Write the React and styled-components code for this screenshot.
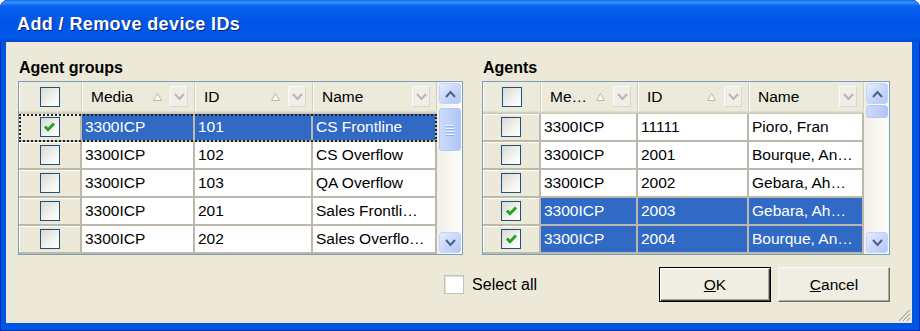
import React from 'react';
import styled, { createGlobalStyle } from 'styled-components';

const GlobalStyle = createGlobalStyle`
  html, body { margin: 0; padding: 0; background: #fff; }
  body { font-family: "Liberation Sans", Arial, sans-serif; }
  * { box-sizing: border-box; }
`;

const Window = styled.div`
  width: 920px;
  height: 331px;
  display: flex;
  flex-direction: column;
  background: #0055e5;
  border-radius: 8px 8px 0 0;
  overflow: hidden;
  box-shadow: inset 1px 0 #0030b0, inset -1px 0 #0030b0, inset 0 -1px #0030b0;
`;

const TitleBar = styled.div`
  height: 42px;
  flex: none;
  display: flex;
  align-items: center;
  padding: 7px 0 0 17px;
  background: linear-gradient(180deg, #0a6af5 0%, #3a93ff 5%, #0b62f0 14%, #0055e5 50%, #0058ec 88%, #0046cf 100%);
  color: #fff;
  font-size: 18px;
  font-weight: bold;
  letter-spacing: 0.4px;
  text-shadow: 1px 1px #0f1f6b;
`;

const Body = styled.div`
  flex: 1;
  position: relative;
  margin: 0 8px 8px 6px;
  background: #ece9d8;
  padding: 16px 22px 0 12px;
  display: flex;
  flex-direction: column;
`;

const Panels = styled.div`
  display: flex;
  gap: 19px;
`;

const Panel = styled.div`
  width: ${p => p.$width}px;
  display: flex;
  flex-direction: column;
`;

const Label = styled.div`
  font-size: 16px;
  font-weight: bold;
  line-height: 20px;
  margin-bottom: 3px;
  padding-left: 1px;
  color: #000;
`;

const ListView = styled.div`
  height: 174px;
  border: 1px solid #7f9db9;
  background: #fff;
  display: flex;
`;

const Table = styled.div`
  flex: 1;
  display: flex;
  flex-direction: column;
`;

const HeaderRow = styled.div`
  display: grid;
  grid-template-columns: ${p => p.$cols};
  height: 32px;
  padding-bottom: 3px;
  background: #ebeadb;
  box-shadow: inset 0 -1px #cbc7b8, inset 0 -2px #d6d2c2, inset 0 -3px #e2decd;
`;

const HeaderCell = styled.div`
  display: flex;
  align-items: center;
  justify-content: ${p => (p.$center ? 'center' : 'flex-start')};
  padding: ${p => (p.$center ? '0' : '0 6px 0 9px')};
  border-right: 1px solid #d3d0c2;
  box-shadow: inset 1px 0 #fbfbf8;
  font-size: 15.5px;
  color: #000;
  white-space: nowrap;
`;

const HeaderText = styled.span`
  flex: 1;
`;

const SortMark = styled.svg`
  width: 9px;
  height: 8px;
  margin-right: 8px;
`;

const DropButton = styled.div`
  width: 18px;
  height: 21px;
  display: flex;
  align-items: center;
  justify-content: center;
  background: #efeee8;
  border: 1px solid;
  border-color: #fbfbf9 #dad8ce #dad8ce #fbfbf9;
`;

const Row = styled.div`
  display: grid;
  grid-template-columns: ${p => p.$cols};
  height: 28px;
  outline: ${p => (p.$focus ? '2px dotted #222' : 'none')};
  outline-offset: -2px;
`;

const CheckCell = styled.div`
  display: flex;
  align-items: center;
  justify-content: center;
  background: #ece9d8;
  border-right: 2px solid #bcb9ac;
  border-bottom: 2px solid #bcb9ac;
  box-shadow: inset 1px 1px #fff;
`;

const DataCell = styled.div`
  display: flex;
  align-items: center;
  padding-left: 3px;
  background: ${p => (p.$selected ? '#316ac5' : '#fff')};
  color: ${p => (p.$selected ? '#fff' : '#000')};
  border-right: 2px solid #bcb9ac;
  border-bottom: 2px solid #bcb9ac;
  font-size: 15.5px;
  white-space: nowrap;
  overflow: hidden;
`;

const ScrollBar = styled.div`
  width: 25px;
  flex: none;
  padding: 1px 1px 1px 2px;
  display: flex;
  flex-direction: column;
  background: linear-gradient(90deg, #f1efe6, #fefefb);
`;

const ScrollButton = styled.div`
  height: 21px;
  flex: none;
  display: flex;
  align-items: center;
  justify-content: center;
  border: 1px solid #c3d3fb;
  border-radius: 3px;
  background: linear-gradient(135deg, #e4ecfe 0%, #c9d8fc 50%, #b3c8f6 100%);
`;

const Thumb = styled.div`
  height: ${p => p.$h}px;
  margin-top: ${p => p.$top}px;
  flex: none;
  display: flex;
  flex-direction: column;
  align-items: center;
  justify-content: center;
  gap: 2px;
  border: 1px solid #b6c8f5;
  border-radius: 3px;
  background: linear-gradient(90deg, #cbdafc 0%, #bccff9 60%, #b0c5f5 100%);
`;

const GripLine = styled.div`
  width: 8px;
  height: 1px;
  background: #eef3fe;
  box-shadow: 0 1px #8cb0f8;
`;

const Spacer = styled.div`
  flex: 1;
`;

const BoxWrap = styled.div`
  width: 20px;
  height: 20px;
  border: 1.5px solid #1c5180;
  background: linear-gradient(135deg, #d9d8d1 0%, #f4f4f0 60%, #ffffff 100%);
  display: flex;
  align-items: center;
  justify-content: center;
`;

const BottomRow = styled.div`
  display: flex;
  align-items: center;
  justify-content: flex-end;
  margin-top: 12px;
`;

const SelectAll = styled.label`
  display: flex;
  align-items: center;
  gap: 8px;
  margin-right: 115px;
  font-size: 16px;
  color: #000;
`;

const PlainBox = styled.div`
  width: 20px;
  height: 19px;
  background: #fff;
  border: 1px solid #c6c4b9;
  box-shadow: inset 1px 1px #e2e0d6;
`;

const Button = styled.button`
  width: 112px;
  height: 35px;
  margin-left: 7px;
  font-family: "Liberation Sans", Arial, sans-serif;
  font-size: 15.5px;
  color: #000;
  background: #f0eee3;
  border: 1px solid;
  border-color: ${p => (p.$default ? '#000' : '#f8f7f2 #716f64 #716f64 #f8f7f2')};
  box-shadow: ${p =>
    p.$default
      ? 'inset 1px 1px #fff, inset -1px -1px #404040, inset -2px -2px #aca899'
      : 'inset -1px -1px #aca899'};
  padding: 0;
`;

const Grip = styled.svg`
  position: absolute;
  right: 1px;
  bottom: 1px;
  width: 18px;
  height: 18px;
`;

const Chevron = ({ up, color = '#4d6185', w = 9, h = 6, sw = 2 }) => (
  <svg width={w + 2} height={h + 2} viewBox={`-1 -1 ${w + 2} ${h + 2}`}>
    <polyline
      points={up ? `0,${h} ${w / 2},1 ${w},${h}` : `0,0 ${w / 2},${h - 1} ${w},0`}
      fill="none"
      stroke={color}
      strokeWidth={sw}
    />
  </svg>
);

const CheckBox = ({ checked }) => (
  <BoxWrap>
    {checked && (
      <svg width="13" height="12" viewBox="0 0 13 12">
        <polyline points="2,5.5 5,8.8 11,2.5" fill="none" stroke="#21a121" strokeWidth="2.8" />
      </svg>
    )}
  </BoxWrap>
);

const Header = ({ cols, columns }) => (
  <HeaderRow $cols={cols}>
    <HeaderCell $center>
      <CheckBox />
    </HeaderCell>
    {columns.map(c => (
      <HeaderCell key={c.title}>
        <HeaderText>{c.title}</HeaderText>
        {c.sort && (
          <SortMark viewBox="0 0 9 8">
            <polygon points="0.5,7.5 4.5,0.5 8.5,7.5" fill="#fbfbf8" stroke="#bdbaab" />
          </SortMark>
        )}
        <DropButton>
          <Chevron color="#b9b7ad" w={9} h={6} sw={2} />
        </DropButton>
      </HeaderCell>
    ))}
  </HeaderRow>
);

const Grid = ({ cols, columns, rows, thumb }) => (
  <ListView>
    <Table>
      <Header cols={cols} columns={columns} />
      {rows.map((r, i) => (
        <Row key={i} $cols={cols} $focus={r.focus}>
          <CheckCell>
            <CheckBox checked={r.checked} />
          </CheckCell>
          {r.cells.map((c, j) => (
            <DataCell key={j} $selected={r.selected}>
              {c}
            </DataCell>
          ))}
        </Row>
      ))}
    </Table>
    <ScrollBar>
      <ScrollButton>
        <Chevron up />
      </ScrollButton>
      <Thumb $h={thumb.h} $top={thumb.top}>
        {thumb.h > 20 && [0, 1, 2, 3].map(k => <GripLine key={k} />)}
      </Thumb>
      <Spacer />
      <ScrollButton>
        <Chevron />
      </ScrollButton>
    </ScrollBar>
  </ListView>
);

const groupRows = [
  { cells: ['3300ICP', '101', 'CS Frontline'], checked: true, selected: true, focus: true },
  { cells: ['3300ICP', '102', 'CS Overflow'] },
  { cells: ['3300ICP', '103', 'QA Overflow'] },
  { cells: ['3300ICP', '201', 'Sales Frontli…'] },
  { cells: ['3300ICP', '202', 'Sales Overflo…'] },
];

const agentRows = [
  { cells: ['3300ICP', '11111', 'Pioro, Fran'] },
  { cells: ['3300ICP', '2001', 'Bourque, An…'] },
  { cells: ['3300ICP', '2002', 'Gebara, Ah…'] },
  { cells: ['3300ICP', '2003', 'Gebara, Ah…'], checked: true, selected: true },
  { cells: ['3300ICP', '2004', 'Bourque, An…'], checked: true, selected: true },
];

export default function App() {
  return (
    <>
      <GlobalStyle />
      <Window>
        <TitleBar>Add / Remove device IDs</TitleBar>
        <Body>
          <Panels>
            <Panel $width={445}>
              <Label>Agent groups</Label>
              <Grid
                cols="63px 113px 118px 124px"
                columns={[
                  { title: 'Media', sort: true },
                  { title: 'ID', sort: true },
                  { title: 'Name' },
                ]}
                rows={groupRows}
                thumb={{ h: 43, top: 4 }}
              />
            </Panel>
            <Panel $width={408}>
              <Label>Agents</Label>
              <Grid
                cols="58px 97px 111px 115px"
                columns={[
                  { title: 'Me…', sort: true },
                  { title: 'ID', sort: true },
                  { title: 'Name' },
                ]}
                rows={agentRows}
                thumb={{ h: 13, top: 1 }}
              />
            </Panel>
          </Panels>
          <BottomRow>
            <SelectAll>
              <PlainBox />
              Select all
            </SelectAll>
            <Button $default>
              <u>O</u>K
            </Button>
            <Button>
              <u>C</u>ancel
            </Button>
          </BottomRow>
          <Grip viewBox="0 0 18 18">
            {[4, 8, 12].map(o => (
              <g key={o}>
                <line x1={18 - o} y1="17" x2="17" y2={18 - o} stroke="#aca899" strokeWidth="1.5" />
                <line x1={19 - o} y1="17.5" x2="17.5" y2={19 - o} stroke="#fff" strokeWidth="1" />
              </g>
            ))}
          </Grip>
        </Body>
      </Window>
    </>
  );
}
